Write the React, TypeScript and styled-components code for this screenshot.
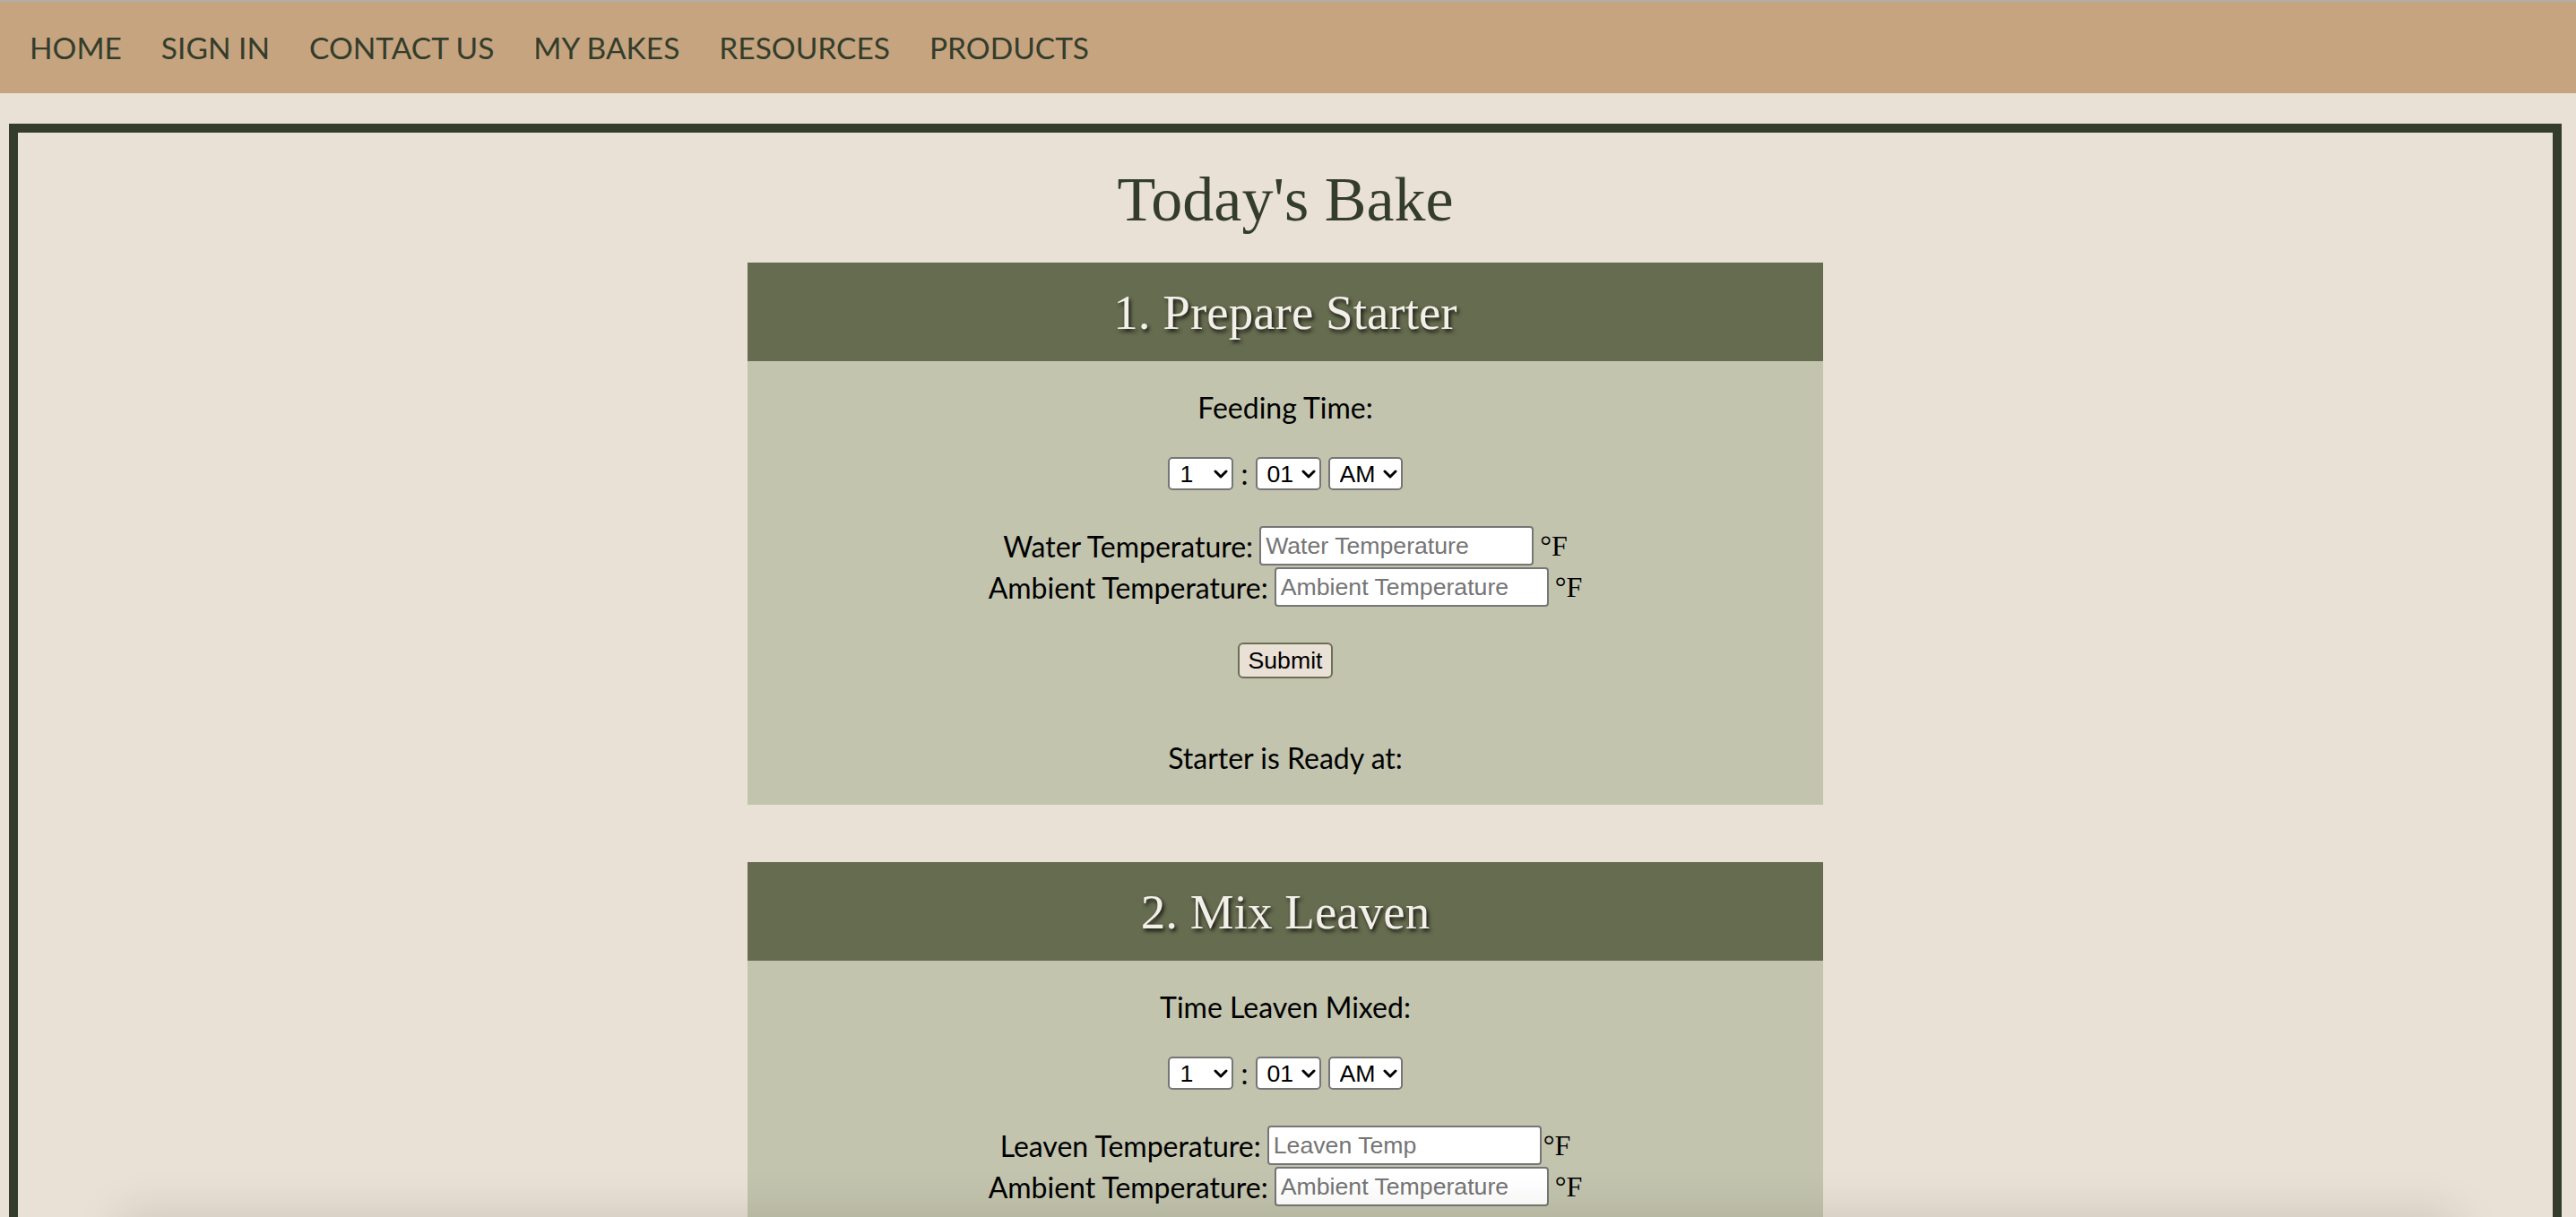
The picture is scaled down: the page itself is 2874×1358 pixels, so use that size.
import { useState } from "react";
import styled, { createGlobalStyle } from "styled-components";

const GlobalStyle = createGlobalStyle`
  html {
    scrollbar-width: none;
  }
  body {
    margin: 0;
    background: #e9e0d6;
    font-family: "Liberation Serif", "Times New Roman", serif;
    font-size: 32px;
    color: #000;
  }
`;

const NavBar = styled.nav`
  display: flex;
  align-items: center;
  gap: 44px;
  height: 102px;
  padding: 0 33px;
  border-top: 2px solid #b1aea9;
  background: #c6a480;
`;

const NavLink = styled.a`
  font-family: Lato, "Liberation Sans", sans-serif;
  font-size: 33.5px;
  line-height: 41px;
  color: #343d2b;
  text-decoration: none;
  text-transform: uppercase;
`;

const Frame = styled.main`
  display: flex;
  flex-direction: column;
  align-items: center;
  margin: 34px 16px 0 10px;
  padding: 35px 0 64px;
  border: 10px solid #343d2b;
`;

const PageTitle = styled.h1`
  margin: 0 0 30px;
  font-family: "Liberation Serif", "Times New Roman", serif;
  font-size: 70px;
  font-weight: 400;
  line-height: 80px;
  color: #343d2b;
`;

const Steps = styled.div`
  display: flex;
  flex-direction: column;
  gap: 64px;
  width: 1200px;
`;

const StepHeader = styled.h2`
  display: flex;
  align-items: center;
  justify-content: center;
  height: 110px;
  margin: 0;
  background: #666c4f;
  color: #f3efe9;
  font-family: "Liberation Serif", "Times New Roman", serif;
  font-size: 55px;
  font-weight: 400;
  text-shadow: 2px 3px 4px rgba(0, 0, 0, 0.8);
`;

const StepBody = styled.div`
  display: flex;
  flex-direction: column;
  align-items: center;
  padding: 32px 0 33px;
  background: #c2c4ae;
  font-family: Lato, "Liberation Sans", sans-serif;
  font-size: 32px;
`;

const Prompt = styled.p`
  margin: 0;
  line-height: 39px;
`;

const TimeRow = styled.div`
  display: flex;
  align-items: center;
  gap: 8px;
  height: 37px;
  margin-top: 36px;
`;

const Colon = styled.span`
  line-height: 37px;
`;

const SelectWrap = styled.span`
  position: relative;
  display: inline-flex;
`;

const Select = styled.select`
  appearance: none;
  height: 37px;
  padding: 0 28px 0 11px;
  border: 2px solid #767676;
  border-radius: 5px;
  background: #fff;
  color: #000;
  font-family: "Liberation Sans", Arial, sans-serif;
  font-size: 26.67px;
`;

const Chevron = styled.svg`
  position: absolute;
  top: 50%;
  right: 6px;
  width: 16px;
  height: 10px;
  transform: translateY(-50%);
  pointer-events: none;
`;

const TempGroup = styled.div`
  display: flex;
  flex-direction: column;
  align-items: center;
  gap: 2px;
  margin-top: 40px;
`;

const TempRow = styled.div`
  display: flex;
  align-items: center;
  height: 44px;
`;

const TempLabel = styled.label`
  margin-right: 7px;
`;

const TempInput = styled.input`
  box-sizing: border-box;
  width: 306px;
  height: 44px;
  padding: 0 5px;
  border: 2px solid #767676;
  border-radius: 4px;
  background: #fff;
  font-family: "Liberation Sans", Arial, sans-serif;
  font-size: 26.67px;

  &::placeholder {
    color: #757575;
  }
`;

const Unit = styled.span<{ $attached?: boolean }>`
  margin-left: ${(props) => (props.$attached ? "2px" : "7px")};
  font-family: "Liberation Serif", "Times New Roman", serif;
  font-size: 32px;
`;

const SubmitButton = styled.button`
  height: 40px;
  margin-top: 40px;
  padding: 0 10px;
  border: 2px solid #6b6f52;
  border-radius: 6px;
  background: #e9e0d6;
  color: #000;
  font-family: "Liberation Sans", Arial, sans-serif;
  font-size: 26.67px;
`;

const Result = styled.p`
  margin: 69px 0 0;
  line-height: 39px;
`;

const FooterShadow = styled.div`
  position: fixed;
  top: calc(100vh + 6px);
  left: 140px;
  right: 140px;
  height: 80px;
  box-shadow: 0 -4px 50px 6px rgba(50, 35, 15, 0.13);
  pointer-events: none;
`;

const hours = Array.from({ length: 12 }, (_, i) => String(i + 1));
const minutes = Array.from({ length: 60 }, (_, i) => String(i).padStart(2, "0"));

type TTemp = {
  label: string;
  placeholder: string;
  attached?: boolean;
};

type TStep = {
  title: string;
  prompt: string;
  temps: TTemp[];
  result: string;
};

const steps: TStep[] = [
  {
    title: "1. Prepare Starter",
    prompt: "Feeding Time:",
    temps: [
      { label: "Water Temperature:", placeholder: "Water Temperature" },
      { label: "Ambient Temperature:", placeholder: "Ambient Temperature" },
    ],
    result: "Starter is Ready at:",
  },
  {
    title: "2. Mix Leaven",
    prompt: "Time Leaven Mixed:",
    temps: [
      { label: "Leaven Temperature:", placeholder: "Leaven Temp", attached: true },
      { label: "Ambient Temperature:", placeholder: "Ambient Temperature" },
    ],
    result: "Leaven is Ready at:",
  },
];

const Dropdown = ({ options, value }: { options: string[]; value: string }) => {
  const [selected, setSelected] = useState(value);
  return (
    <SelectWrap>
      <Select value={selected} onChange={(e) => setSelected(e.target.value)}>
        {options.map((option) => (
          <option key={option}>{option}</option>
        ))}
      </Select>
      <Chevron viewBox="0 0 16 10">
        <polyline
          points="2,2 8,8 14,2"
          fill="none"
          stroke="#000"
          strokeWidth="3"
          strokeLinecap="round"
          strokeLinejoin="round"
        />
      </Chevron>
    </SelectWrap>
  );
};

const StepCard = ({ step }: { step: TStep }) => (
  <section>
    <StepHeader>{step.title}</StepHeader>
    <StepBody>
      <Prompt>{step.prompt}</Prompt>
      <TimeRow>
        <Dropdown options={hours} value="1" />
        <Colon>:</Colon>
        <Dropdown options={minutes.slice(1).concat("00")} value="01" />
        <Dropdown options={["AM", "PM"]} value="AM" />
      </TimeRow>
      <TempGroup>
        {step.temps.map((temp) => (
          <TempRow key={temp.label}>
            <TempLabel>{temp.label}</TempLabel>
            <TempInput type="number" placeholder={temp.placeholder} />
            <Unit $attached={temp.attached}>°F</Unit>
          </TempRow>
        ))}
      </TempGroup>
      <SubmitButton type="button">Submit</SubmitButton>
      <Result>{step.result}</Result>
    </StepBody>
  </section>
);

export default function App() {
  return (
    <>
      <GlobalStyle />
      <NavBar>
        {["Home", "Sign In", "Contact Us", "My Bakes", "Resources", "Products"].map((link) => (
          <NavLink key={link} href="#">
            {link}
          </NavLink>
        ))}
      </NavBar>
      <Frame>
        <PageTitle>Today's Bake</PageTitle>
        <Steps>
          {steps.map((step) => (
            <StepCard key={step.title} step={step} />
          ))}
        </Steps>
      </Frame>
      <FooterShadow />
    </>
  );
}
